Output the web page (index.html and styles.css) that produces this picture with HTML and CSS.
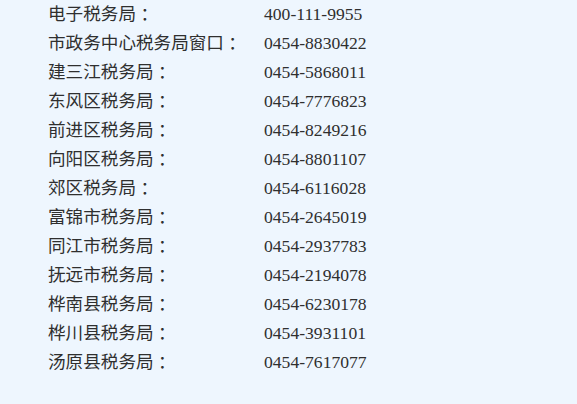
FILE: index.html
```html
<!DOCTYPE html>
<html lang="zh-CN">
<head>
  <meta charset="UTF-8" />
  <title>税务局联系电话</title>
  <link rel="stylesheet" href="styles.css">
</head>
<body>
  <div class="phone-list">
    <div class="row"><span class="name">电子税务局<i class="colon">：</i></span><span class="tel">400-111-9955</span></div>
    <div class="row"><span class="name">市政务中心税务局窗口<i class="colon">：</i></span><span class="tel">0454-8830422</span></div>
    <div class="row"><span class="name">建三江税务局<i class="colon">：</i></span><span class="tel">0454-5868011</span></div>
    <div class="row"><span class="name">东风区税务局<i class="colon">：</i></span><span class="tel">0454-7776823</span></div>
    <div class="row"><span class="name">前进区税务局<i class="colon">：</i></span><span class="tel">0454-8249216</span></div>
    <div class="row"><span class="name">向阳区税务局<i class="colon">：</i></span><span class="tel">0454-8801107</span></div>
    <div class="row"><span class="name">郊区税务局<i class="colon">：</i></span><span class="tel">0454-6116028</span></div>
    <div class="row"><span class="name">富锦市税务局<i class="colon">：</i></span><span class="tel">0454-2645019</span></div>
    <div class="row"><span class="name">同江市税务局<i class="colon">：</i></span><span class="tel">0454-2937783</span></div>
    <div class="row"><span class="name">抚远市税务局<i class="colon">：</i></span><span class="tel">0454-2194078</span></div>
    <div class="row"><span class="name">桦南县税务局<i class="colon">：</i></span><span class="tel">0454-6230178</span></div>
    <div class="row"><span class="name">桦川县税务局<i class="colon">：</i></span><span class="tel">0454-3931101</span></div>
    <div class="row"><span class="name">汤原县税务局<i class="colon">：</i></span><span class="tel">0454-7617077</span></div>
  </div>
</body>
</html>
```

FILE: styles.css
```css
html, body {
  margin: 0;
  padding: 0;
  background: #eef6fe;
  font-family: "Liberation Serif", "Noto Sans CJK SC", serif;
  color: #2f2f2f;
}

.phone-list {
  padding: 0 0 0 48px;
}

.row {
  display: flex;
  font-size: 17.6px;
  line-height: 29px;
}

.name {
  width: 216px;
  flex-shrink: 0;
}

/* full-width colon, dots centred in its cell */
.colon {
  display: inline-block;
  width: 1em;
  text-align: center;
  font-style: normal;
  font-feature-settings: "halt";
}
```
